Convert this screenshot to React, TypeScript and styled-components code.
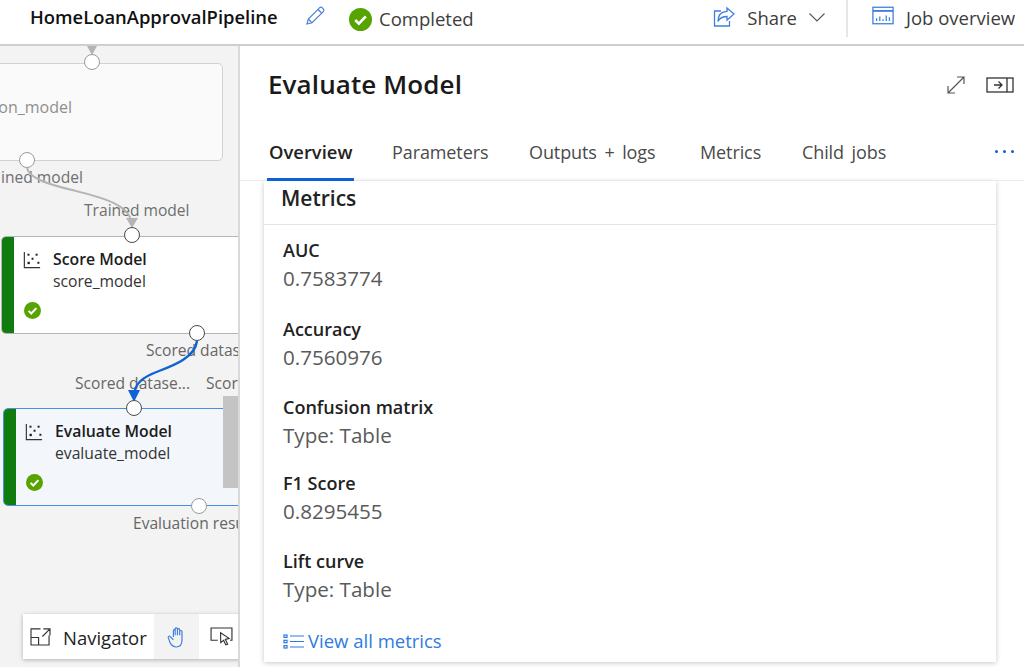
import React from 'react';
import styled, { createGlobalStyle } from 'styled-components';

const Global = createGlobalStyle`
  html, body { margin: 0; padding: 0; background: #fff; overflow: hidden; }
  * { box-sizing: border-box; }
  #root { width: 1024px; height: 667px; font-family: "Open Sans", "Noto Sans", "Liberation Sans", sans-serif; }
`;

const Page = styled.div`
  width: 1024px; height: 667px; display: flex; flex-direction: column; overflow: hidden; background: #fff;
`;
const TopBar = styled.header`
  height: 46px; flex: none; display: flex; align-items: center; border-bottom: 2px solid #cfcfcf; padding-left: 30px; padding-bottom: 6px;
`;
const PipelineName = styled.div`
  font-size: 18.4px; font-weight: 600; color: #111; width: 248px; white-space: nowrap; line-height: 24px; margin-top: -4px;
`;
const EditWrap = styled.div`
  margin-left: 25px; width: 24px; height: 24px; display: flex; align-items: center; justify-content: center; margin-top: -6px;
`;
const StatusWrap = styled.div`
  margin-left: 22px; display: flex; align-items: center; gap: 7px; margin-top: 0;
`;
const StatusText = styled.span`
  font-size: 18.5px; color: #3c3c3c; line-height: 24px;
`;
const TopActions = styled.div`
  margin-left: auto; display: flex; align-items: center; height: 38px; margin-top: -2px;
`;
const ActionText = styled.span`
  font-size: 18.5px; color: #3c3c3c; letter-spacing: 0; white-space: nowrap; margin-top: -2px;
`;
const ShareAction = styled.div`
  display: flex; align-items: center; gap: 11px; padding-right: 20px; border-right: 2px solid #e6e6e6; height: 38px;
`;
const OverviewAction = styled.div`
  display: flex; align-items: center; gap: 12px; padding-left: 24px; width: 176px;
`;
const OverviewGlyph = styled.div`
  display: flex; margin-top: -5px;
`;
const Main = styled.div`
  flex: 1; display: flex; min-height: 0;
`;
const Canvas = styled.div`
  position: relative; width: 238px; flex: none; height: 621px; background: #f3f3f3; overflow: hidden;
`;
const GhostNode = styled.div`
  position: absolute; left: -60px; top: 17px; width: 283px; height: 98px; background: #fafafa; border: 1.5px solid #d2d2d2; border-radius: 5px;
`;
const GhostText = styled.span`
  position: absolute; right: 150px; top: 32px; font-size: 16px; color: #8f8f8f; white-space: nowrap;
`;
const Node = styled.div<{ $left: number; $top: number; $sel?: boolean }>`
  position: absolute; left: ${p => p.$left}px; top: ${p => p.$top}px; width: 260px; height: 98px;
  background: ${p => (p.$sel ? '#f3f7fc' : '#fff')};
  border: 1.5px solid ${p => (p.$sel ? '#4a90e2' : '#b5b5b5')};
  border-radius: 5px; display: flex; overflow: hidden;
`;
const NodeBar = styled.div`
  width: 12px; flex: none; background: #107c10;
`;
const NodeBody = styled.div`
  position: relative; flex: 1; display: grid; grid-template-columns: 30px 1fr; grid-template-rows: 22px 20px auto; padding: 12px 0 0 9px;
`;
const NodeIcon = styled.div`
  grid-row: 1; grid-column: 1; padding-top: 2px;
`;
const NodeTitle = styled.div`
  font-size: 15.8px; font-weight: 600; color: #1c1c1c; white-space: nowrap; line-height: 20px;
`;
const NodeSub = styled.div`
  grid-column: 2; font-size: 15.7px; color: #333; white-space: nowrap; line-height: 20px;
`;
const NodeStatus = styled.div`
  grid-column: 1 / 3; margin-top: 11px; margin-left: 1px;
`;
const Port = styled.div<{ $x: number; $y: number; $dim?: boolean }>`
  position: absolute; left: ${p => p.$x - 8}px; top: ${p => p.$y - 8 - 46}px; width: 16px; height: 16px; border-radius: 50%;
  background: #fff; border: 1.5px solid ${p => (p.$dim ? '#9a9a9a' : '#4a4a4a')};
`;
const PortLabel = styled.span<{ $x: number; $y: number; $dim?: boolean }>`
  position: absolute; left: ${p => p.$x}px; top: ${p => p.$y - 46}px; font-size: 15.6px; line-height: 18px;
  color: ${p => (p.$dim ? '#6f6f6f' : '#666')}; white-space: nowrap;
`;
const Wires = styled.svg`
  position: absolute; left: 0; top: 0; width: 238px; height: 621px;
`;
const ScrollThumb = styled.div`
  position: absolute; left: 223px; top: 350px; width: 15px; height: 92px; background: #c4c4c4;
`;
const Navigator = styled.div`
  position: absolute; left: 23px; top: 568px; width: 240px; height: 45px; background: #fff; box-shadow: 0 1px 4px rgba(0,0,0,.28);
  display: flex; align-items: center; padding-left: 7px;
`;
const NavLabel = styled.span`
  font-size: 18.5px; color: #222; margin-left: 12px; margin-top: 2px; width: 91px; white-space: nowrap;
`;
const NavTool = styled.div<{ $active?: boolean }>`
  width: 45px; height: 45px; display: flex; align-items: center; justify-content: center; background: ${p => (p.$active ? '#f3f3f3' : '#fff')};
`;
const Panel = styled.section`
  flex: 1; display: flex; flex-direction: column; border-left: 2px solid #d9d9d9; min-width: 0;
`;
const PanelHead = styled.div`
  height: 79px; flex: none; display: flex; align-items: center; padding: 0 10px 0 28px;
`;
const PanelTitle = styled.h1`
  margin: 0; font-size: 26px; line-height: 36px; font-weight: 600; color: #1a1a1a; letter-spacing: 0.1px; margin-top: -3px;
`;
const PanelTools = styled.div`
  margin-left: auto; display: flex; align-items: center; gap: 20px; margin-top: -2px;
`;
const Tabs = styled.nav`
  height: 56px; flex: none; display: flex; align-items: flex-start; padding-left: 29px; border-bottom: 1px solid #e9e9e9; position: relative;
`;
const Tab = styled.div<{ $active?: boolean; $w: number }>`
  width: ${p => p.$w}px; height: 56px; padding-top: 15px; line-height: 24px; white-space: nowrap; word-spacing: 3px;
  font-size: ${p => (p.$active ? 18.4 : 18)}px; letter-spacing: ${p => (p.$active ? 0 : -0.1)}px;
  color: ${p => (p.$active ? '#222' : '#4a4a4a')}; font-weight: ${p => (p.$active ? 600 : 400)};
  position: relative;
  ${p => p.$active && `&::after { content: ''; position: absolute; left: -2px; width: 87px; bottom: 0; height: 3px; background: #0f62d6; }`}
`;
const More = styled.div`
  position: absolute; left: 755px; top: 25px; display: flex; gap: 5px;
`;
const Dot = styled.i`
  width: 3px; height: 3px; border-radius: 50%; background: #0f62d6; display: block;
`;
const Card = styled.div`
  margin: 0 28px 0 24px; height: 481px; flex: none; background: #fff; box-shadow: 0 1px 5px rgba(0,0,0,.22); display: flex; flex-direction: column;
`;
const CardTitle = styled.div`
  height: 44px; flex: none; border-bottom: 1px solid #e3e3e3; padding: 3px 0 0 17px; font-size: 21px; line-height: 28px; font-weight: 600; color: #222;
`;
const MetricList = styled.div`
  padding: 13px 0 0 19px; display: flex; flex-direction: column; flex: 1;
`;
const Metric = styled.div<{ $h: number }>`
  height: ${p => p.$h}px;
`;
const MetricName = styled.div`
  font-size: 18px; line-height: 24px; font-weight: 600; color: #222;
`;
const MetricValue = styled.div`
  font-size: 20.6px; line-height: 30px; margin-top: 1px; color: #5a5a5a;
`;
const ViewAll = styled.div`
  display: flex; align-items: center; gap: 4px; margin-top: 18px; color: #2f7be0; font-size: 18.5px; line-height: 24px;
`;

const Check = ({ size = 24 }: { size?: number }) => (
  <svg width={size} height={size} viewBox="0 0 24 24">
    <circle cx="12" cy="12" r="12" fill="#57a300" />
    <path d="M6.5 12.5l3.8 3.8 7.2-7.6" fill="none" stroke="#fff" strokeWidth="2.8" />
  </svg>
);
const Scatter = () => (
  <svg width="18" height="18" viewBox="0 0 20 20" fill="none">
    <path d="M1.5 1v17.5H19" stroke="#333" strokeWidth="1.3" />
    <g fill="#222">
      <rect x="5" y="3" width="2.2" height="2.2" /><rect x="5" y="12" width="2.6" height="2.6" /><rect x="9.5" y="7.5" width="2.2" height="2.2" />
      <rect x="14" y="3" width="2.2" height="2.2" /><rect x="16" y="12" width="2.2" height="2.2" />
    </g>
  </svg>
);
const Pencil = () => (
  <svg width="22" height="22" viewBox="0 0 22 22" fill="none" stroke="#4a7fe0" strokeWidth="1.2">
    <path d="M3 19l1.3-5L15.5 2.8c.8-.8 2-.8 2.8 0l1 1c.8.8.8 2 0 2.8L8 17.8 3 19z" />
    <path d="M4.3 14L8 17.8M14 4.5l3.5 3.5" />
  </svg>
);
const ShareIcon = () => (
  <svg width="24" height="24" viewBox="0 0 24 24" fill="none" stroke="#3f7fe0" strokeWidth="1.3">
    <path d="M9 5H2.5v15h15v-5" />
    <path d="M15 2l7 6-7 6v-3.5c-4 0-7 1-9 5 0-6 3-10 9-10.2V2z" />
  </svg>
);
const Chevron = () => (
  <svg width="18" height="12" viewBox="0 0 18 12" fill="none" stroke="#555" strokeWidth="1.1"><path d="M1.5 1.5L9 9l7.5-7.5" /></svg>
);
const OverviewIcon = () => (
  <svg width="22" height="19" viewBox="0 0 24 20" fill="none" stroke="#3f7fe0" strokeWidth="1.4">
    <rect x="1" y="1" width="22" height="18" />
    <path d="M1 5h22" strokeWidth="2" />
    <path d="M5 16v-3M8.5 16v-5M12 16v-2M15.5 16v-6M19 16v-4" />
  </svg>
);
const Expand = () => (
  <svg width="20" height="20" viewBox="0 0 20 20" fill="none" stroke="#555" strokeWidth="1.2">
    <path d="M2 18L18 2M11 2h7v7M2 11v7h7" />
  </svg>
);
const Collapse = () => (
  <svg width="28" height="16" viewBox="0 0 28 16" fill="none" stroke="#333" strokeWidth="1.3">
    <rect x="1" y="1" width="26" height="14" />
    <path d="M21 1v14M8 8h8M12.5 4.5L16 8l-3.5 3.5" />
  </svg>
);
const NavIcon = () => (
  <svg width="21" height="19" viewBox="0 0 22 20" fill="none" stroke="#333" strokeWidth="1.2">
    <path d="M11 2H1v17h19V9M1 11h8v8M14 2h7v7M21 2l-8 8" />
  </svg>
);
const HandIcon = () => (
  <svg width="20" height="22" viewBox="0 0 22 24" fill="none" stroke="#3f7fe0" strokeWidth="1.3">
    <path d="M7 12V5c0-1.5 2-1.5 2 0v5-7c0-1.5 2.5-1.5 2.5 0v7-6c0-1.5 2.5-1.5 2.5 0v6-4c0-1.5 2.5-1.5 2.5 0v9c0 5-2.5 8-6.5 8-3.5 0-5-2-6.5-4.5L1.5 13c-.8-1.5 1-2.5 2-1.5L7 15" />
  </svg>
);
const PresentIcon = () => (
  <svg width="23" height="19" viewBox="0 0 24 20" fill="none" stroke="#333" strokeWidth="1.2">
    <path d="M8 14H1V1h22v13h-2" />
    <path d="M11 6l9 6-4 1 2.5 5-2 .8-2.3-4.8-3 2.5z" fill="#fff" />
  </svg>
);
const ListIcon = () => (
  <svg width="21" height="15" viewBox="0 0 21 15" fill="none" stroke="#2f7be0" strokeWidth="1.2">
    <path d="M7 2h14M7 7.5h14M7 13h14" />
    <rect x="1" y="1" width="3" height="2.4" /><rect x="1" y="6.3" width="3" height="2.4" /><rect x="1" y="11.6" width="3" height="2.4" />
  </svg>
);

const metrics = [
  { name: 'AUC', value: '0.7583774', h: 79 },
  { name: 'Accuracy', value: '0.7560976', h: 78 },
  { name: 'Confusion matrix', value: 'Type: Table', h: 76 },
  { name: 'F1 Score', value: '0.8295455', h: 78 },
  { name: 'Lift curve', value: 'Type: Table', h: 62 },
];

export default function App() {
  return (
    <Page>
      <Global />
      <TopBar>
        <PipelineName>HomeLoanApprovalPipeline</PipelineName>
        <EditWrap><Pencil /></EditWrap>
        <StatusWrap>
          <Check size={23} />
          <StatusText>Completed</StatusText>
        </StatusWrap>
        <TopActions>
          <ShareAction>
            <ShareIcon />
            <ActionText>Share</ActionText>
            <Chevron />
          </ShareAction>
          <OverviewAction>
            <OverviewGlyph><OverviewIcon /></OverviewGlyph>
            <ActionText>Job overview</ActionText>
          </OverviewAction>
        </TopActions>
      </TopBar>
      <Main>
        <Canvas>
          <GhostNode>
            <GhostText>on_model</GhostText>
          </GhostNode>
          <PortLabel $x={1} $y={168} $dim>ined model</PortLabel>
          <PortLabel $x={84} $y={201} $dim>Trained model</PortLabel>
          <Node $left={1} $top={190}>
            <NodeBar />
            <NodeBody>
              <NodeIcon><Scatter /></NodeIcon>
              <NodeTitle>Score Model</NodeTitle>
              <NodeSub>score_model</NodeSub>
              <NodeStatus><Check size={17} /></NodeStatus>
            </NodeBody>
          </Node>
          <PortLabel $x={146} $y={341}>Scored datas</PortLabel>
          <PortLabel $x={75} $y={374}>Scored datase...</PortLabel>
          <PortLabel $x={206} $y={374}>Scor</PortLabel>
          <Node $left={3} $top={362} $sel>
            <NodeBar />
            <NodeBody>
              <NodeIcon><Scatter /></NodeIcon>
              <NodeTitle>Evaluate Model</NodeTitle>
              <NodeSub>evaluate_model</NodeSub>
              <NodeStatus><Check size={17} /></NodeStatus>
            </NodeBody>
          </Node>
          <ScrollThumb />
          <PortLabel $x={133} $y={514}>Evaluation resu</PortLabel>
          <Wires viewBox="0 46 238 621">
            <path d="M87 46h10l-5 9z" fill="#b4b4b4" />
            <path d="M27 168c2 10 20 16 45 22 28 7 60 14 60 36" fill="none" stroke="#b4b4b4" strokeWidth="2" />
            <path d="M126 218h12l-6 10z" fill="#b4b4b4" />
            <path d="M197 341c-2 16-22 24-38 30-16 6-25 12-25 26" fill="none" stroke="#0f62d6" strokeWidth="2.4" />
            <path d="M128 390h12l-6 12z" fill="#0f62d6" />
          </Wires>
          <Port $x={92} $y={62} $dim />
          <Port $x={27} $y={160} $dim />
          <Port $x={132} $y={235} />
          <Port $x={197} $y={333} />
          <Port $x={134} $y={408} />
          <Port $x={199} $y={506} $dim />
          <Navigator>
            <NavIcon />
            <NavLabel>Navigator</NavLabel>
            <NavTool $active><HandIcon /></NavTool>
            <NavTool><PresentIcon /></NavTool>
          </Navigator>
        </Canvas>
        <Panel>
          <PanelHead>
            <PanelTitle>Evaluate Model</PanelTitle>
            <PanelTools>
              <Expand />
              <Collapse />
            </PanelTools>
          </PanelHead>
          <Tabs>
            <Tab $active $w={123}>Overview</Tab>
            <Tab $w={137}>Parameters</Tab>
            <Tab $w={171}>Outputs + logs</Tab>
            <Tab $w={102}>Metrics</Tab>
            <Tab $w={100}>Child jobs</Tab>
            <More><Dot /><Dot /><Dot /></More>
          </Tabs>
          <Card>
            <CardTitle>Metrics</CardTitle>
            <MetricList>
              {metrics.map(m => (
                <Metric key={m.name} $h={m.h}>
                  <MetricName>{m.name}</MetricName>
                  <MetricValue>{m.value}</MetricValue>
                </Metric>
              ))}
              <ViewAll><ListIcon />View all metrics</ViewAll>
            </MetricList>
          </Card>
        </Panel>
      </Main>
    </Page>
  );
}
